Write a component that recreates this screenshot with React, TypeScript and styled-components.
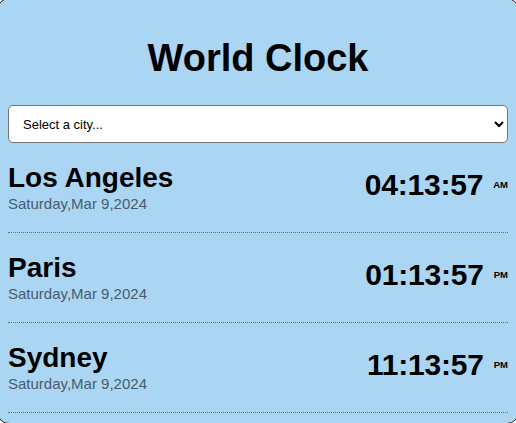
import React from "react";
import styled, { createGlobalStyle } from "styled-components";

const GlobalStyle = createGlobalStyle`
  html, body {
    margin: 0;
    padding: 0;
    background: #ffffff;
    overflow: hidden;
  }
  body {
    font-family: "Liberation Sans", Arial, sans-serif;
  }
`;

const Card = styled.div`
  margin: -2px -3px 0 -3px;
  padding: 0 10px 10px;
  background: #aad6f4;
  border: 1px solid #1f2a33;
  border-radius: 12px;
  box-sizing: border-box;
`;

const Title = styled.h1`
  margin: 37px 0 25px;
  font-size: 38px;
  line-height: 44px;
  font-weight: 700;
  text-align: center;
  color: #000;
`;

const CitySelect = styled.select`
  display: block;
  width: 100%;
  height: 38px;
  padding: 0 8px 0 10px;
  font-family: "Liberation Sans", Arial, sans-serif;
  font-size: 13px;
  color: #000;
  background: #fff;
  border: 1px solid #767676;
  border-radius: 5px;
  box-sizing: border-box;
`;

const List = styled.div`
  display: flex;
  flex-direction: column;
`;

const Row = styled.div`
  display: flex;
  align-items: center;
  justify-content: space-between;
  padding: 19px 0 18px;
  border-bottom: 1px dotted #5f7283;
`;

const CityInfo = styled.div`
  display: flex;
  flex-direction: column;
`;

const CityName = styled.div`
  font-size: 28px;
  line-height: 32px;
  font-weight: 700;
  color: #000;
`;

const CityDate = styled.div`
  font-size: 15px;
  line-height: 20px;
  color: #4a5b6b;
`;

const Time = styled.div`
  display: flex;
  align-items: center;
  padding-bottom: 6px;
  font-size: 30px;
  line-height: 36px;
  font-weight: 700;
  letter-spacing: -0.2px;
  color: #000;
`;

const Meridiem = styled.span`
  margin-left: 10px;
  font-size: 9.5px;
  font-weight: 700;
  letter-spacing: 0;
`;

const cities = [
  { name: "Los Angeles", date: "Saturday,Mar 9,2024", time: "04:13:57", ampm: "AM" },
  { name: "Paris", date: "Saturday,Mar 9,2024", time: "01:13:57", ampm: "PM" },
  { name: "Sydney", date: "Saturday,Mar 9,2024", time: "11:13:57", ampm: "PM" },
];

export default function App() {
  return (
    <>
      <GlobalStyle />
      <Card>
        <Title>World Clock</Title>
        <CitySelect defaultValue="">
          <option value="">Select a city...</option>
          <option value="la">Los Angeles</option>
          <option value="paris">Paris</option>
          <option value="sydney">Sydney</option>
        </CitySelect>
        <List>
          {cities.map((c) => (
            <Row key={c.name}>
              <CityInfo>
                <CityName>{c.name}</CityName>
                <CityDate>{c.date}</CityDate>
              </CityInfo>
              <Time>
                {c.time}
                <Meridiem>{c.ampm}</Meridiem>
              </Time>
            </Row>
          ))}
        </List>
      </Card>
    </>
  );
}
